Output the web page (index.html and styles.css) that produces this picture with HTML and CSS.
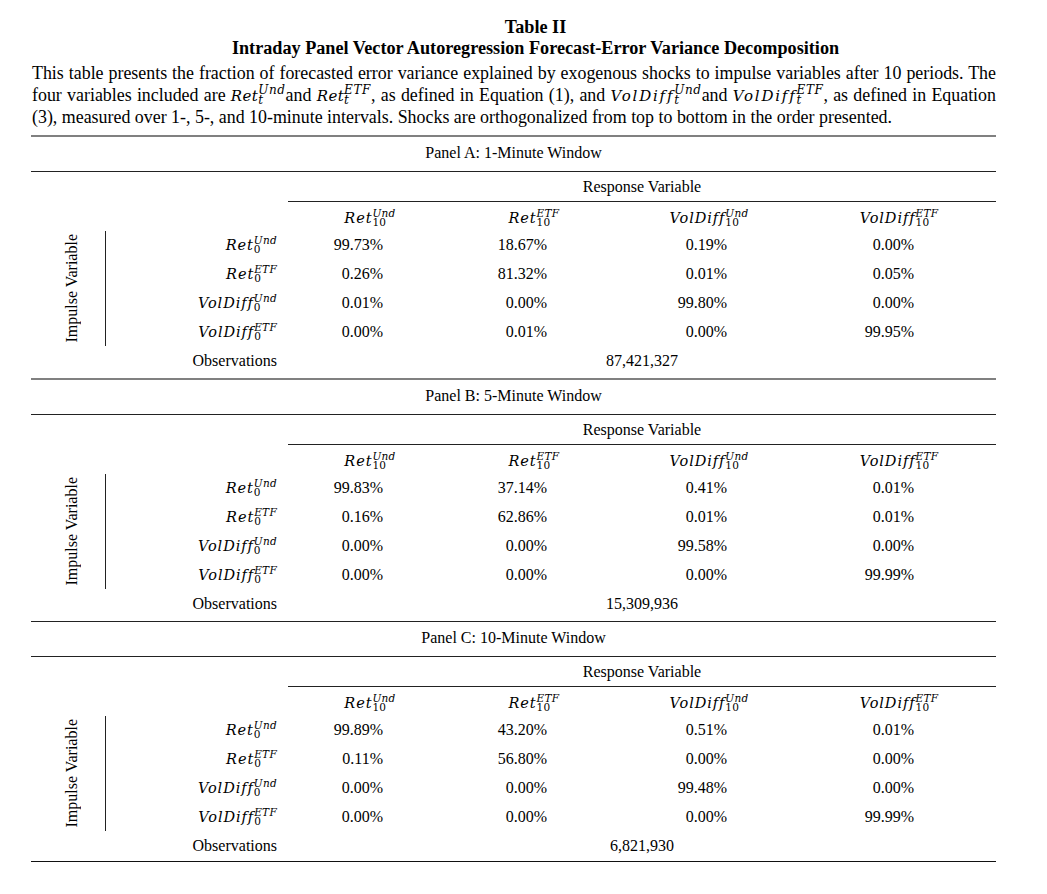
FILE: index.html
```html
<!DOCTYPE html>
<html>
<head>
<meta charset="utf-8">
<title>Table II</title>
<link rel="stylesheet" href="styles.css">
</head>
<body>
<div class="page">
  <div class="caption">
    <div class="t1">Table II</div>
    <div class="t2">Intraday Panel Vector Autoregression Forecast-Error Variance Decomposition</div>
  </div>
  <p class="desc"><span class="line jl">This table presents the fraction of forecasted error variance explained by exogenous shocks to impulse variables after 10 periods. The</span> <span class="line jl">four variables included are <span class="m pm">Ret<span class="ss"><sup>Und</sup><sub class="it">t</sub></span></span>and <span class="m pm">Ret<span class="ss"><sup>ETF</sup><sub class="it">t</sub></span></span>, as defined in Equation (1), and <span class="m pm"><span class="wide">VolDiff</span><span class="ss"><sup>Und</sup><sub class="it">t</sub></span></span>and <span class="m pm"><span class="wide">VolDiff</span><span class="ss"><sup>ETF</sup><sub class="it">t</sub></span></span>, as defined in Equation</span> <span class="line">(3), measured over 1-, 5-, and 10-minute intervals. Shocks are orthogonalized from top to bottom in the order presented.</span></p>

  <div class="table">
    <div class="panel top-thick">
      <div class="ptitle">Panel A: 1-Minute Window</div>
      <div class="resp">Response Variable</div>
      <div class="hd first"><span class="m">Ret<span class="ss"><sup>Und</sup><sub>10</sub></span></span></div>
      <div class="hd"><span class="m">Ret<span class="ss"><sup>ETF</sup><sub>10</sub></span></span></div>
      <div class="hd"><span class="m">VolDiff<span class="ss"><sup>Und</sup><sub>10</sub></span></span></div>
      <div class="hd"><span class="m">VolDiff<span class="ss"><sup>ETF</sup><sub>10</sub></span></span></div>
      <div class="imp"><span>Impulse Variable</span></div>
      <div class="rl"><span class="m">Ret<span class="ss"><sup>Und</sup><sub>0</sub></span></span></div>
      <div class="n c1">99.73%</div><div class="n c2">18.67%</div><div class="n c3">0.19%</div><div class="n c4">0.00%</div>
      <div class="rl"><span class="m">Ret<span class="ss"><sup>ETF</sup><sub>0</sub></span></span></div>
      <div class="n c1">0.26%</div><div class="n c2">81.32%</div><div class="n c3">0.01%</div><div class="n c4">0.05%</div>
      <div class="rl"><span class="m">VolDiff<span class="ss"><sup>Und</sup><sub>0</sub></span></span></div>
      <div class="n c1">0.01%</div><div class="n c2">0.00%</div><div class="n c3">99.80%</div><div class="n c4">0.00%</div>
      <div class="rl"><span class="m">VolDiff<span class="ss"><sup>ETF</sup><sub>0</sub></span></span></div>
      <div class="n c1">0.00%</div><div class="n c2">0.01%</div><div class="n c3">0.00%</div><div class="n c4">99.95%</div>
      <div class="obs-l">Observations</div>
      <div class="obs-v">87,421,327</div>
    </div>

    <div class="panel top-thick">
      <div class="ptitle">Panel B: 5-Minute Window</div>
      <div class="resp">Response Variable</div>
      <div class="hd first"><span class="m">Ret<span class="ss"><sup>Und</sup><sub>10</sub></span></span></div>
      <div class="hd"><span class="m">Ret<span class="ss"><sup>ETF</sup><sub>10</sub></span></span></div>
      <div class="hd"><span class="m">VolDiff<span class="ss"><sup>Und</sup><sub>10</sub></span></span></div>
      <div class="hd"><span class="m">VolDiff<span class="ss"><sup>ETF</sup><sub>10</sub></span></span></div>
      <div class="imp"><span>Impulse Variable</span></div>
      <div class="rl"><span class="m">Ret<span class="ss"><sup>Und</sup><sub>0</sub></span></span></div>
      <div class="n c1">99.83%</div><div class="n c2">37.14%</div><div class="n c3">0.41%</div><div class="n c4">0.01%</div>
      <div class="rl"><span class="m">Ret<span class="ss"><sup>ETF</sup><sub>0</sub></span></span></div>
      <div class="n c1">0.16%</div><div class="n c2">62.86%</div><div class="n c3">0.01%</div><div class="n c4">0.01%</div>
      <div class="rl"><span class="m">VolDiff<span class="ss"><sup>Und</sup><sub>0</sub></span></span></div>
      <div class="n c1">0.00%</div><div class="n c2">0.00%</div><div class="n c3">99.58%</div><div class="n c4">0.00%</div>
      <div class="rl"><span class="m">VolDiff<span class="ss"><sup>ETF</sup><sub>0</sub></span></span></div>
      <div class="n c1">0.00%</div><div class="n c2">0.00%</div><div class="n c3">0.00%</div><div class="n c4">99.99%</div>
      <div class="obs-l">Observations</div>
      <div class="obs-v">15,309,936</div>
    </div>

    <div class="panel last">
      <div class="ptitle">Panel C: 10-Minute Window</div>
      <div class="resp">Response Variable</div>
      <div class="hd first"><span class="m">Ret<span class="ss"><sup>Und</sup><sub>10</sub></span></span></div>
      <div class="hd"><span class="m">Ret<span class="ss"><sup>ETF</sup><sub>10</sub></span></span></div>
      <div class="hd"><span class="m">VolDiff<span class="ss"><sup>Und</sup><sub>10</sub></span></span></div>
      <div class="hd"><span class="m">VolDiff<span class="ss"><sup>ETF</sup><sub>10</sub></span></span></div>
      <div class="imp"><span>Impulse Variable</span></div>
      <div class="rl"><span class="m">Ret<span class="ss"><sup>Und</sup><sub>0</sub></span></span></div>
      <div class="n c1">99.89%</div><div class="n c2">43.20%</div><div class="n c3">0.51%</div><div class="n c4">0.01%</div>
      <div class="rl"><span class="m">Ret<span class="ss"><sup>ETF</sup><sub>0</sub></span></span></div>
      <div class="n c1">0.11%</div><div class="n c2">56.80%</div><div class="n c3">0.00%</div><div class="n c4">0.00%</div>
      <div class="rl"><span class="m">VolDiff<span class="ss"><sup>Und</sup><sub>0</sub></span></span></div>
      <div class="n c1">0.00%</div><div class="n c2">0.00%</div><div class="n c3">99.48%</div><div class="n c4">0.00%</div>
      <div class="rl"><span class="m">VolDiff<span class="ss"><sup>ETF</sup><sub>0</sub></span></span></div>
      <div class="n c1">0.00%</div><div class="n c2">0.00%</div><div class="n c3">0.00%</div><div class="n c4">99.99%</div>
      <div class="obs-l">Observations</div>
      <div class="obs-v">6,821,930</div>
    </div>
  </div>
</div>
</body>
</html>
```

FILE: styles.css
```css
html, body {
  margin: 0;
  padding: 0;
  background: #fff;
}
body {
  font-family: "Liberation Serif", "Times New Roman", serif;
  color: #000;
}
.page {
  width: 965px;
  padding: 17px 0 0 31px;
}
.caption {
  padding-left: 44px;
  text-align: center;
  font-weight: bold;
  font-size: 18.2px;
  line-height: 21px;
}
.desc {
  margin: 4px 0 6px 1px;
  font-size: 17.9px;
  line-height: 21.5px;
  text-align: justify;
}
.desc .line {
  display: block;
}
.desc .line.jl {
  text-align-last: justify;
  white-space: nowrap;
}
.m {
  font-family: "DejaVu Serif", serif;
  font-style: italic;
  font-size: 14.5px;
  letter-spacing: 0.9px;
  font-variant-ligatures: none;
  white-space: nowrap;
}
.m.pm {
  font-size: 15px;
  letter-spacing: 0.4px;
}
.m.pm .wide {
  letter-spacing: 1.8px;
}
.ss {
  display: inline-flex;
  flex-direction: column;
  font-size: 10.5px;
  letter-spacing: 0.3px;
  line-height: 9px;
  vertical-align: 6px;
  margin-left: 0;
}
.pm .ss {
  font-size: 12px;
  letter-spacing: 0.6px;
  line-height: 10px;
  vertical-align: 7px;
}
.ss sup, .ss sub {
  vertical-align: baseline;
  font-size: inherit;
  line-height: inherit;
}
.ss sub {
  font-style: normal;
}
.ss sub.it {
  font-style: italic;
}
.table {
  font-size: 16px;
}
.panel {
  display: grid;
  grid-template-columns: 75px 182px 164px 164px 186px 194px;
  grid-template-rows: 35px 30px;
  grid-auto-rows: 29px;
  border-top: 1px solid #222;
}
.panel.top-thick {
  border-top: 2px solid #808080;
  padding-bottom: 2px;
}
.panel.last {
  border-bottom: 1px solid #111;
}
.panel > div {
  display: flex;
  align-items: center;
}
.ptitle {
  grid-column: 1 / -1;
  justify-content: center;
  border-bottom: 1px solid #222;
  padding-bottom: 1px;
}
.resp {
  grid-column: 3 / -1;
  justify-content: center;
  border-bottom: 1px solid #222;
  padding-top: 2px;
}
.hd {
  justify-content: center;
  padding-top: 4px;
}
.hd.first {
  grid-column: 3;
}
.imp {
  grid-column: 1;
  grid-row: span 4;
  justify-content: center;
  border-right: 1px solid #222;
  margin: 0 0 1px 0;
}
.imp span {
  writing-mode: vertical-rl;
  transform: rotate(180deg);
  white-space: nowrap;
  margin-left: 7px;
}
.rl {
  justify-content: flex-end;
  padding-right: 11px;
}
.n {
  justify-content: flex-end;
}
.c1 { padding-right: 69px; }
.c2 { padding-right: 69px; }
.c3 { padding-right: 75px; }
.c4 { padding-right: 82px; }
.obs-l {
  grid-column: 2;
  justify-content: flex-end;
  padding-right: 11px;
}
.obs-v {
  grid-column: 3 / -1;
  justify-content: center;
}
```
